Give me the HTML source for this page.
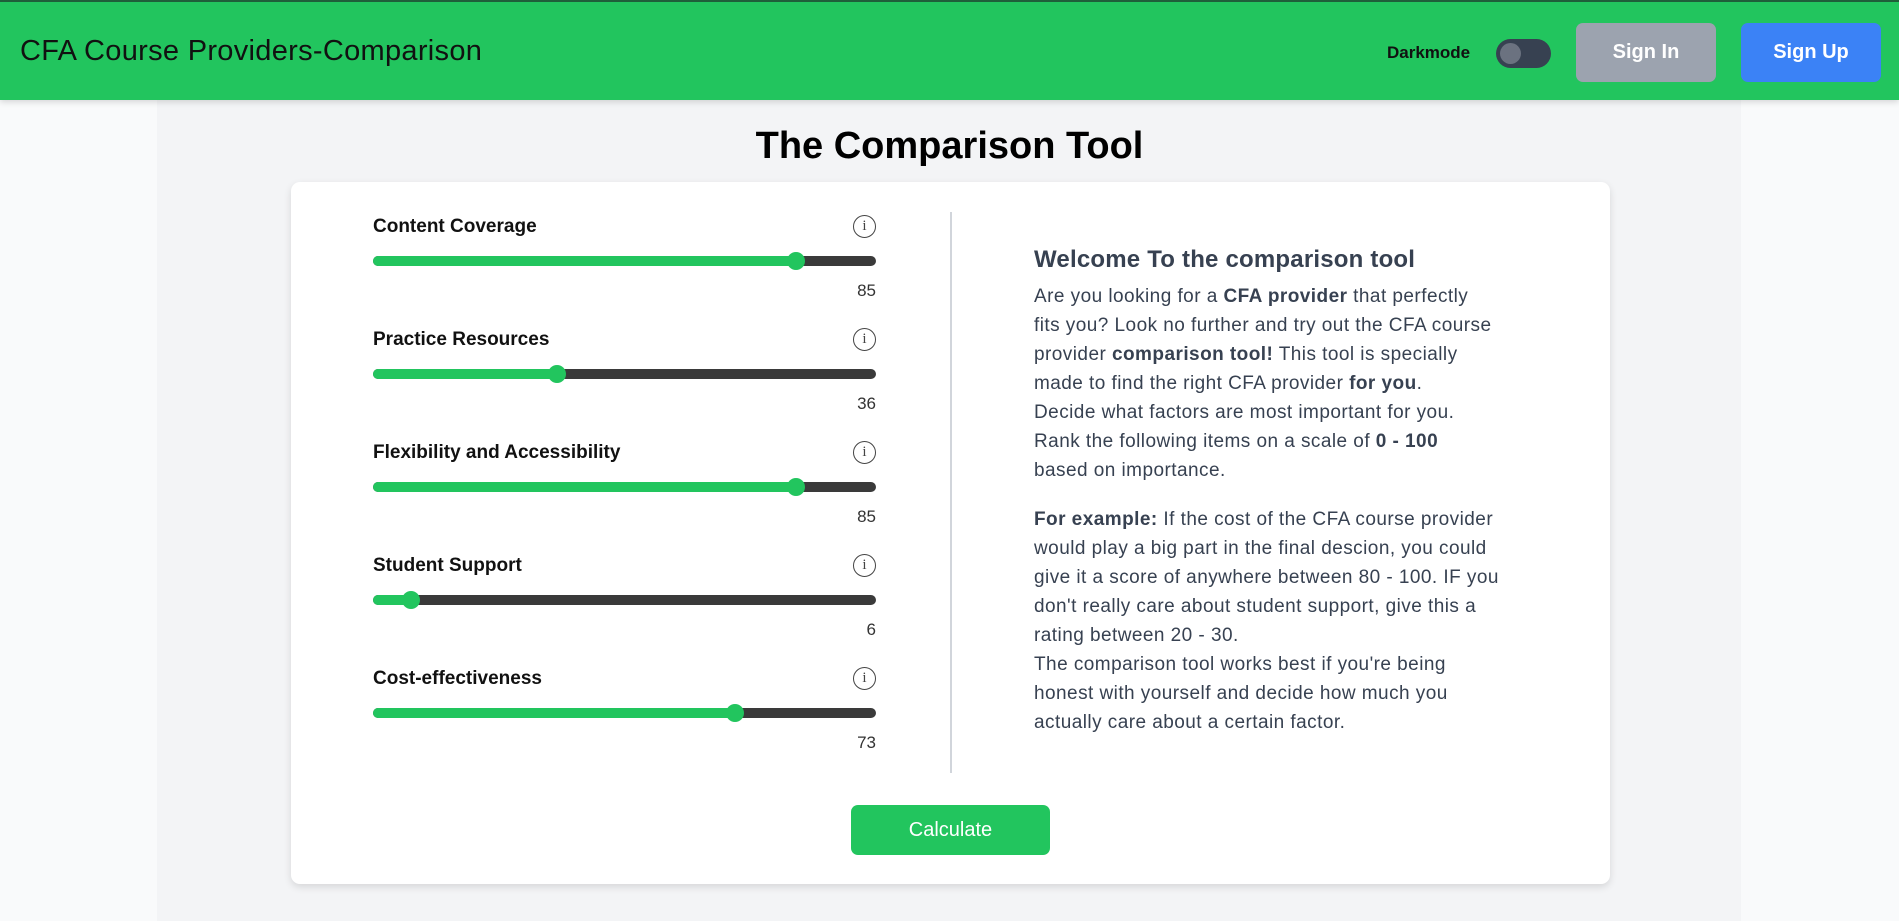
<!DOCTYPE html>
<html><head><meta charset="utf-8"><style>
*{box-sizing:border-box;margin:0;padding:0}
body{width:1899px;height:921px;overflow:hidden;background:#f9fafb;font-family:"Liberation Sans",sans-serif;position:relative}
.hdr{position:absolute;left:0;top:0;width:1899px;height:100px;background:#22c55e;border-top:2px solid #1f5f3a;box-shadow:0 2px 6px rgba(0,0,0,.15);z-index:2}
.ttl{position:absolute;left:20px;top:33px;font-size:29px;color:#111;letter-spacing:0.3px}
.dm{position:absolute;left:1387px;top:41px;font-size:17px;font-weight:bold;color:#111}
.tg{position:absolute;left:1496px;top:37px;width:55px;height:29px;border-radius:15px;background:#374151}
.tg:after{content:"";position:absolute;left:4px;top:4px;width:21px;height:21px;border-radius:50%;background:#6b7280}
.btn{position:absolute;top:21px;height:59px;border-radius:7px;color:#fff;font-weight:bold;font-size:20px;text-align:center;line-height:59px}
.main{position:absolute;left:157px;top:100px;width:1584px;height:821px;background:#f3f4f6}
h1{position:absolute;left:0;width:1899px;top:125px;text-align:center;font-size:38px;font-weight:bold;color:#000}
.card{position:absolute;left:291px;top:182px;width:1319px;height:702px;background:#fff;border-radius:9px;box-shadow:0 3px 8px rgba(0,0,0,.12)}
.item{position:absolute;left:373px;width:503px}
.lbl{position:absolute;left:0;top:2px;font-size:19px;font-weight:bold;color:#111}
.info{position:absolute;right:0;top:1px;width:23px;height:23px;border:1.8px solid #444;border-radius:50%;font-size:15px;text-align:center;line-height:20px;color:#444;font-family:"Liberation Serif",serif}
.trk{position:absolute;left:0;top:42px;width:503px;height:10px;border-radius:5px;background:#3a3a3a;overflow:visible}
.fill{position:absolute;left:0;top:0;height:10px;border-radius:5px;background:#22c55e}
.th{position:absolute;top:-4px;width:18px;height:18px;border-radius:50%;background:#22c55e;margin-left:-9px}
.val{position:absolute;right:0;top:67px;font-size:17px;color:#333}
.div{position:absolute;left:950px;top:212px;width:2px;height:561px;background:#d1d5db}
.rt{position:absolute;left:1034px;top:245px;color:#374151;font-size:19px;line-height:29px;letter-spacing:0.45px}
.rt h2{font-size:24px;line-height:29px;margin-bottom:8px;letter-spacing:0.2px}
.rt p{margin:0}
.calc{position:absolute;left:851px;top:805px;width:199px;height:50px;background:#22c55e;border-radius:7px;color:#fff;font-size:20px;text-align:center;line-height:50px}
</style></head><body>
<div class="hdr">
<div class="ttl">CFA Course Providers-Comparison</div>
<div class="dm">Darkmode</div>
<div class="tg"></div>
<div class="btn" style="left:1576px;width:140px;background:#9ca3af">Sign In</div>
<div class="btn" style="left:1741px;width:140px;background:#3b82f6">Sign Up</div>
</div>
<div class="main"></div>
<h1>The Comparison Tool</h1>
<div class="card"></div>
<div class="item" style="top:214px"><div class="lbl">Content Coverage</div><div class="info">i</div><div class="trk"><div class="fill" style="width:84%"></div><div class="th" style="left:84%"></div></div><div class="val">85</div></div>
<div class="item" style="top:327px"><div class="lbl">Practice Resources</div><div class="info">i</div><div class="trk"><div class="fill" style="width:36.5%"></div><div class="th" style="left:36.5%"></div></div><div class="val">36</div></div>
<div class="item" style="top:440px"><div class="lbl">Flexibility and Accessibility</div><div class="info">i</div><div class="trk"><div class="fill" style="width:84%"></div><div class="th" style="left:84%"></div></div><div class="val">85</div></div>
<div class="item" style="top:553px"><div class="lbl">Student Support</div><div class="info">i</div><div class="trk"><div class="fill" style="width:7.5%"></div><div class="th" style="left:7.5%"></div></div><div class="val">6</div></div>
<div class="item" style="top:666px"><div class="lbl">Cost-effectiveness</div><div class="info">i</div><div class="trk"><div class="fill" style="width:72%"></div><div class="th" style="left:72%"></div></div><div class="val">73</div></div>
<div class="div"></div>
<div class="rt">
<h2>Welcome To the comparison tool</h2>
<p>Are you looking for a <b>CFA provider</b> that perfectly<br>fits you? Look no further and try out the CFA course<br>provider <b>comparison tool!</b> This tool is specially<br>made to find the right CFA provider <b>for you</b>.<br>Decide what factors are most important for you.<br>Rank the following items on a scale of <b>0 - 100</b><br>based on importance.</p>
<p style="margin-top:20px"><b>For example:</b> If the cost of the CFA course provider<br>would play a big part in the final descion, you could<br>give it a score of anywhere between 80 - 100. IF you<br>don't really care about student support, give this a<br>rating between 20 - 30.<br>The comparison tool works best if you're being<br>honest with yourself and decide how much you<br>actually care about a certain factor.</p>
</div>
<div class="calc">Calculate</div>
</body></html>
